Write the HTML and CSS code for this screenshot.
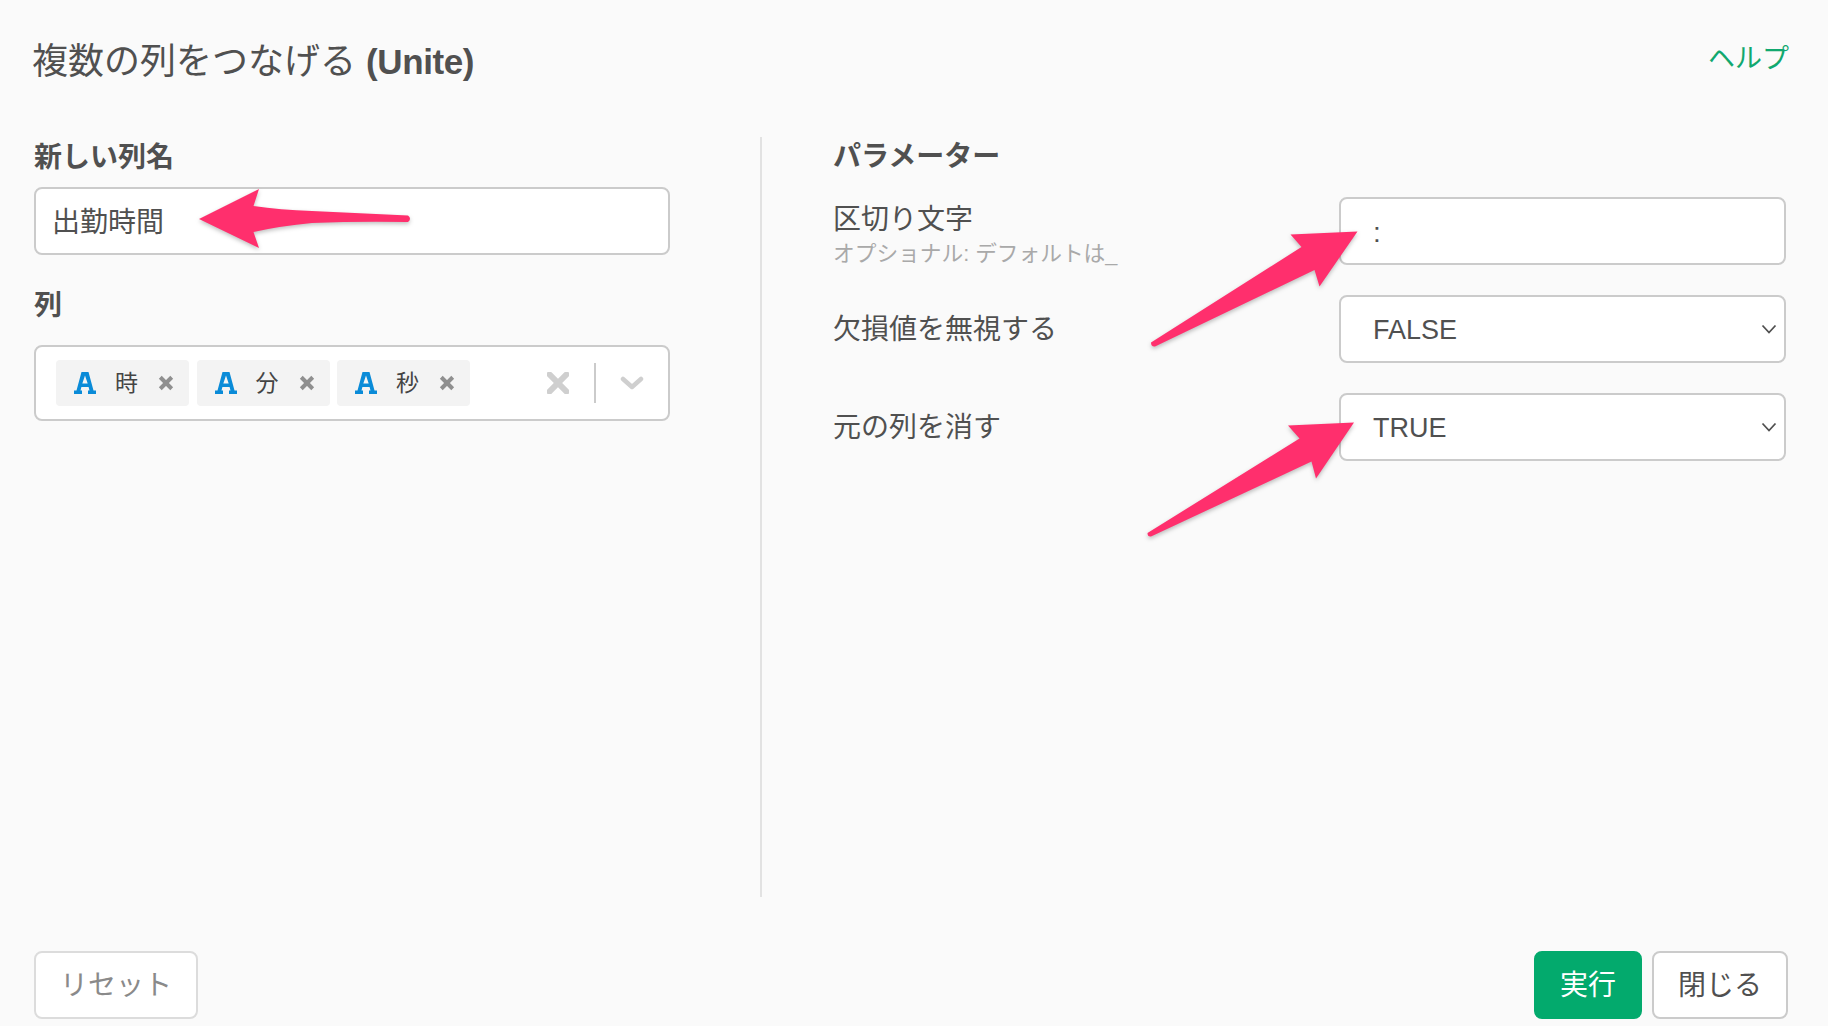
FILE: index.html
```html
<!DOCTYPE html>
<html lang="ja">
<head>
<meta charset="utf-8">
<title>Unite</title>
<link rel="stylesheet" href="styles.css">
</head>
<body>
<div class="page">
  <header class="header">
    <h1 class="title">複数の列をつなげる <span class="title-en">(Unite)</span></h1>
    <a class="help" href="#">ヘルプ</a>
  </header>
  <main class="main">
    <section class="left">
      <div class="label">新しい列名</div>
      <div class="box text-box">出勤時間</div>
      <div class="label label-columns">列</div>
      <div class="box multi">
        <div class="tags">
          <div class="tag"><svg class="type" viewBox="0 0 22 22"><path fill-rule="evenodd" d="M7.500 0H14.500L19.500 18.500H22V22H14V18.500H15.500L14.600 15H7.400L6.500 18.500H8V22H0V18.500H2.500ZM8.300 11.500H13.700L11 3.500Z"/></svg><span class="tag-name">時</span><svg class="tag-x" viewBox="0 0 14 14"><path d="M2 2l10 10M12 2L2 12"/></svg></div>
          <div class="tag"><svg class="type" viewBox="0 0 22 22"><path fill-rule="evenodd" d="M7.500 0H14.500L19.500 18.500H22V22H14V18.500H15.500L14.600 15H7.400L6.500 18.500H8V22H0V18.500H2.500ZM8.300 11.500H13.700L11 3.500Z"/></svg><span class="tag-name">分</span><svg class="tag-x" viewBox="0 0 14 14"><path d="M2 2l10 10M12 2L2 12"/></svg></div>
          <div class="tag"><svg class="type" viewBox="0 0 22 22"><path fill-rule="evenodd" d="M7.500 0H14.500L19.500 18.500H22V22H14V18.500H15.500L14.600 15H7.400L6.500 18.500H8V22H0V18.500H2.500ZM8.300 11.500H13.700L11 3.500Z"/></svg><span class="tag-name">秒</span><svg class="tag-x" viewBox="0 0 14 14"><path d="M2 2l10 10M12 2L2 12"/></svg></div>
        </div>
        <svg class="clear-x" viewBox="0 0 18 18"><path d="M2 2l14 14M16 2L2 16"/></svg>
        <span class="sep"></span>
        <svg class="multi-chev" viewBox="0 0 24 14"><path d="M3 3l9 8 9-8"/></svg>
      </div>
    </section>
    <section class="right">
      <div class="heading">パラメーター</div>
      <div class="params">
        <div class="param-label param-label-top">区切り文字<div class="hint">オプショナル: デフォルトは_</div></div>
        <div class="box text-box control">:</div>
        <div class="param-label">欠損値を無視する</div>
        <div class="box control select">FALSE<svg class="sel-chev" viewBox="0 0 16 10"><path d="M1.5 1.5L8 8.500l6.500-7"/></svg></div>
        <div class="param-label">元の列を消す</div>
        <div class="box control select">TRUE<svg class="sel-chev" viewBox="0 0 16 10"><path d="M1.5 1.5L8 8.500l6.500-7"/></svg></div>
      </div>
    </section>
  </main>
  <footer class="footer">
    <button class="btn btn-reset">リセット</button>
    <div class="footer-right">
      <button class="btn btn-run">実行</button>
      <button class="btn btn-close">閉じる</button>
    </div>
  </footer>
  <svg class="arrows" viewBox="0 0 1828 1026">
    <path class="arrow" d="M199 219L259 189L253.500 206Q280 210 312 211L408 215.500Q412 218.500 408 222Q360 221 312 223Q280 226 253.500 232L259 248Z"/>
    <path class="arrow" d="M1357.500 231.500L1290.500 234.500L1301.500 247L1151 342.500Q1151 347 1155 346.500L1314.500 270L1319.500 286.500Z"/>
    <path class="arrow" d="M1354 422.500L1288 425.500L1299.500 438.500L1147.500 533Q1147.500 537 1151 536.500L1311.500 461.500L1316 478.500Z"/>
  </svg>
</div>
</body>
</html>
```
FILE: styles.css
```css
* { box-sizing: border-box; }
html, body { margin: 0; padding: 0; }
body {
  background: #fafafa;
  color: #505050;
  font-family: "Liberation Sans", "Noto Sans CJK JP", sans-serif;
  overflow: hidden;
}
.page {
  position: relative;
  width: 1828px;
  height: 1026px;
  display: flex;
  flex-direction: column;
}
.header {
  height: 137px;
  flex: none;
  display: flex;
  justify-content: space-between;
  align-items: flex-start;
  padding: 37px 39px 0 32px;
}
.title {
  margin: 0;
  font-size: 36px;
  line-height: 50px;
  font-weight: 400;
}
.title-en { font-size: 35px; font-weight: 700; letter-spacing: -0.4px; }
.help {
  color: #11a86f;
  font-size: 27px;
  line-height: 40px;
  margin-top: 2px;
  text-decoration: none;
}
.main {
  flex: 1;
  display: flex;
  min-height: 0;
}
.left {
  width: 760px;
  flex: none;
  padding: 0 90px 0 34px;
}
.label {
  font-size: 28px;
  font-weight: 700;
  line-height: 42px;
  margin-bottom: 8px;
}
.label-columns {
  margin-top: 30px;
  margin-bottom: 18px;
}
.box {
  background: #fff;
  border: 2px solid #cbcbcb;
  border-radius: 8px;
  font-size: 28px;
}
.text-box {
  height: 68px;
  line-height: 67px;
  padding-left: 16px;
}
.multi {
  height: 76px;
  display: flex;
  align-items: center;
  padding: 0 0 0 20px;
}
.tags {
  flex: 1;
  display: flex;
  gap: 7.500px;
}
.tag {
  width: 133px;
  height: 46px;
  background: #f3f3f3;
  border-radius: 4px;
  display: flex;
  align-items: center;
  padding-left: 18px;
}
.type {
  width: 22px;
  height: 22px;
  flex: none;
  fill: #0a8bd8;
}
.tag-name {
  margin-left: 19px;
  width: 24px;
  font-size: 23px;
  color: #444;
  line-height: 46px;
}
.tag-x {
  width: 16px;
  height: 16px;
  margin-left: 19px;
  fill: none;
  stroke: #8f8f8f;
  stroke-width: 3.500;
}
.clear-x {
  width: 22px;
  height: 22px;
  fill: none;
  stroke: #cfcfcf;
  stroke-width: 4.800;
  stroke-linecap: round;
}
.sep {
  width: 2px;
  height: 40px;
  background: #cbcbcb;
  margin: 0 24px 0 25px;
}
.multi-chev {
  width: 24px;
  height: 14px;
  margin-right: 24px;
  fill: none;
  stroke: #cfcfcf;
  stroke-width: 4.500;
  stroke-linecap: round;
  stroke-linejoin: round;
}
.right {
  flex: 1;
  border-left: 2px solid #e2e2e2;
  padding: 0 41px 0 71px;
}
.heading {
  font-size: 28px;
  font-weight: 700;
  line-height: 40px;
  margin-bottom: 20px;
}
.params {
  display: grid;
  grid-template-columns: 506px 447px;
  grid-auto-rows: 68px;
  row-gap: 30px;
}
.param-label {
  font-size: 28px;
  align-self: center;
  line-height: 42px;
  padding-top: 2px;
}
.param-label-top {
  align-self: start;
  line-height: 45px;
  padding-top: 0;
}
.hint {
  font-size: 21.700px;
  line-height: 25px;
  margin-top: -1px;
  color: #a9a9a9;
}
.control { padding-left: 32px; }
.select {
  height: 68px;
  display: flex;
  align-items: center;
  justify-content: space-between;
  padding-right: 7px;
  padding-top: 2px;
  font-size: 27px;
}
.sel-chev {
  width: 16px;
  height: 10px;
  margin-top: -2px;
  fill: none;
  stroke: #505050;
  stroke-width: 1.800;
}
.footer {
  flex: none;
  height: 129px;
  padding: 54px 40px 7px 34px;
  display: flex;
  justify-content: space-between;
}
.footer-right {
  display: flex;
  gap: 10px;
}
.btn {
  height: 68px;
  border-radius: 8px;
  font-family: inherit;
  font-size: 28px;
  padding: 0 0 4px;
  background: #fff;
  border: 2px solid #cbcbcb;
  color: #505050;
}
.btn-reset {
  width: 164px;
  border-color: #dcdcdc;
  color: #8a8a8a;
}
.btn-run {
  width: 108px;
  background: #03aa6d;
  border-color: #03aa6d;
  color: #fff;
}
.btn-close { width: 136px; }
.arrows {
  position: absolute;
  left: 0;
  top: 0;
  width: 1828px;
  height: 1026px;
  pointer-events: none;
}
.arrow {
  fill: #ff2f6d;
  filter: drop-shadow(0 2px 2px rgba(0, 0, 0, 0.25));
}
```
